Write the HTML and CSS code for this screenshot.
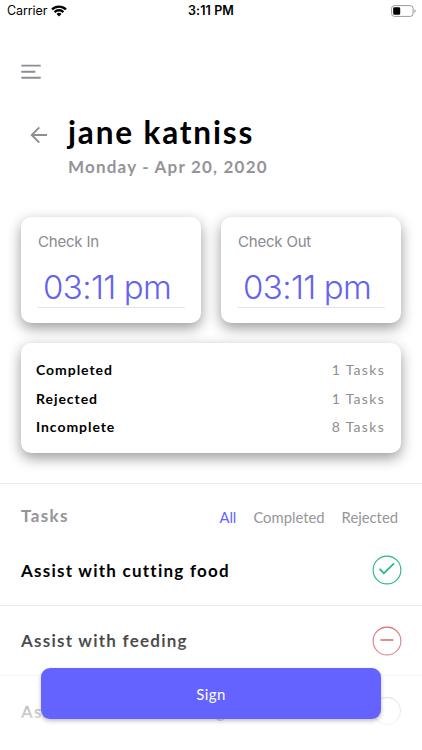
FILE: index.html
```html
<!DOCTYPE html>
<html lang="en">
<head>
<meta charset="utf-8">
<meta name="viewport" content="width=device-width, initial-scale=1">
<title>Visit</title>
<link rel="stylesheet" href="styles.css">
</head>
<body>
<main class="screen">
  <div class="status">
    <div class="carrier"><span>Carrier</span>
      <svg width="16" height="12" viewBox="0 0 16 12"><g fill="none" stroke="#000" stroke-width="2.3"><path d="M1 4.4a10 10 0 0 1 14 0"/><path d="M3.6 7.1a6.2 6.2 0 0 1 8.8 0"/></g><path d="M8 11.5 5.5 9a3.5 3.5 0 0 1 5 0z"/></svg>
    </div>
    <span class="clock">3:11 PM</span>
    <svg class="battery" width="26" height="12" viewBox="0 0 26 12"><rect x="1.6" y=".6" width="21.5" height="10.8" rx="2.8" fill="none" stroke="#999"/><rect x="3.2" y="2.3" width="7" height="7.4" rx="1.3"/><path d="M24.4 4.2q1.3.5 1.3 1.8t-1.3 1.8z" fill="#999"/></svg>
  </div>
  <nav class="menu"><svg width="20" height="16" viewBox="0 0 20 16" fill="none" stroke="#8d8d92" stroke-width="1.9"><path d="M.3 1.6h19.4M.3 7.8h14M.3 13.8h19.4"/></svg></nav>
  <header class="head">
    <svg class="back" width="18" height="18" viewBox="0 0 18 18" fill="none" stroke="#8d8d92" stroke-width="1.9"><path d="M17 9H2M9.3 1.3 1.7 9l7.6 7.7"/></svg>
    <div><h1>jane katniss</h1><p class="date">Monday - Apr 20, 2020</p></div>
  </header>
  <section class="checks">
    <div class="card check"><span class="label">Check In</span><div class="time"><span>03:11</span><span class="pm">pm</span></div></div>
    <div class="card check"><span class="label">Check Out</span><div class="time"><span>03:11</span><span class="pm">pm</span></div></div>
  </section>
  <section class="card summary">
    <div class="line"><b>Completed</b><span>1 Tasks</span></div>
    <div class="line"><b>Rejected</b><span>1 Tasks</span></div>
    <div class="line"><b>Incomplete</b><span>8 Tasks</span></div>
  </section>
  <section class="tasks">
    <div class="bar"><h2>Tasks</h2><div class="tabs"><span class="active">All</span><span>Completed</span><span>Rejected</span></div></div>
    <div class="task"><span>Assist with cutting food</span><svg width="30" height="30" viewBox="0 0 30 30" fill="none" stroke="#27b391"><circle cx="15" cy="15" r="13.9" stroke-width="1.1"/><path d="m7.6 13.8 4.3 4.6L22 8.3" stroke-width="1.7"/></svg></div>
    <div class="task"><span>Assist with feeding</span><svg width="30" height="30" viewBox="0 0 30 30" fill="none" stroke="#cf4850"><circle cx="15" cy="15" r="13.9" stroke-width="1.1"/><path d="M8.4 14h13" stroke-width="1.7"/></svg></div>
    <div class="task"><span>Assist with transferring</span><svg width="30" height="30" viewBox="0 0 30 30" fill="none" stroke="#999"><circle cx="15" cy="15" r="13.6"/></svg></div>
  </section>
  <div class="fade"></div>
  <button class="sign">Sign</button>
</main>
</body>
</html>
```
FILE: styles.css
```css
* { box-sizing: border-box; }
body { margin: 0; background: #fff; font-family: Lato, sans-serif; }
.screen { position: relative; width: 422px; height: 750px; overflow: hidden; background: #fff; }
h1, h2, p { margin: 0; }
svg { display: block; flex: none; }
span, b, h1, h2 { white-space: nowrap; }

.status { height: 22px; padding: 0 6px 0 7px; display: grid; grid-template-columns: 1fr auto 1fr; align-items: center; font: 12.5px/22px Inter, sans-serif; }
.carrier { display: flex; align-items: center; gap: 4px; height: 21px; }
.carrier span { letter-spacing: -.1px; }
.clock { font-weight: 600; font-size: 12.5px; letter-spacing: .1px; margin-right: 1px; }
.battery { justify-self: end; }
.menu { padding: 42px 0 0 21px; }
.head { display: flex; padding: 31px 0 0 30px; height: 137px; }
.back { margin: 15px 20px 0 0; }
h1 { font-size: 31.5px; line-height: 42px; font-weight: 700; letter-spacing: 1.85px; }
.date { font-size: 17px; line-height: 24px; font-weight: 700; letter-spacing: 1.2px; color: #949499; margin-top: 2px; }

.card { background: #fff; border-radius: 10px; box-shadow: 0 5px 14px rgba(0, 0, 0, .4); }
.checks { display: flex; gap: 20px; padding: 0 21px; }
.check { flex: 1; height: 106px; padding: 13px 16px 0 17px; }
.label { display: block; font: 400 15px/24px Inter, sans-serif; letter-spacing: -.2px; color: #8a8a8f; }
.time { display: flex; gap: 8px; height: 41px; margin-top: 13px; padding-left: 5px; border-bottom: 1px solid #e4e4e6; color: #6463ef; font: 350 33px/41px Inter, sans-serif; letter-spacing: -.6px; }
.summary { margin: 20px 21px 0; height: 110px; padding: 13px 16px 0 15px; }
.line { display: flex; justify-content: space-between; height: 28.5px; line-height: 28.5px; font-size: 14px; letter-spacing: .95px; }
.line span { color: #8d8d92; letter-spacing: 1.3px; }

.tasks { margin-top: 30px; }
.bar { display: flex; justify-content: space-between; height: 52px; padding: 0 24px 0 21px; border-top: 1px solid #e9e9eb; }
h2 { font-size: 17px; line-height: 64px; letter-spacing: 1.4px; color: #949499; }
.tabs { display: flex; gap: 17px; font-size: 14.8px; line-height: 66px; color: #96969b; }
.active { color: #6463ff; }
.task { display: flex; align-items: center; justify-content: space-between; height: 70.5px; padding: 1px 20px 0 21px; border-bottom: 1px solid #e9e9eb; font-size: 17px; font-weight: 700; letter-spacing: 1.24px; }
.fade { position: absolute; left: 0; right: 0; bottom: 0; height: 150px; background: linear-gradient(rgba(255, 255, 255, 0), #fff 95%); }
.sign { position: absolute; left: 41px; top: 668px; width: 340px; height: 51px; border: 0; border-radius: 9px; background: #6463ff; color: #fff; font: 15px Lato, sans-serif; letter-spacing: .4px; box-shadow: 0 2px 4px rgba(0, 0, 0, .25); }
```
